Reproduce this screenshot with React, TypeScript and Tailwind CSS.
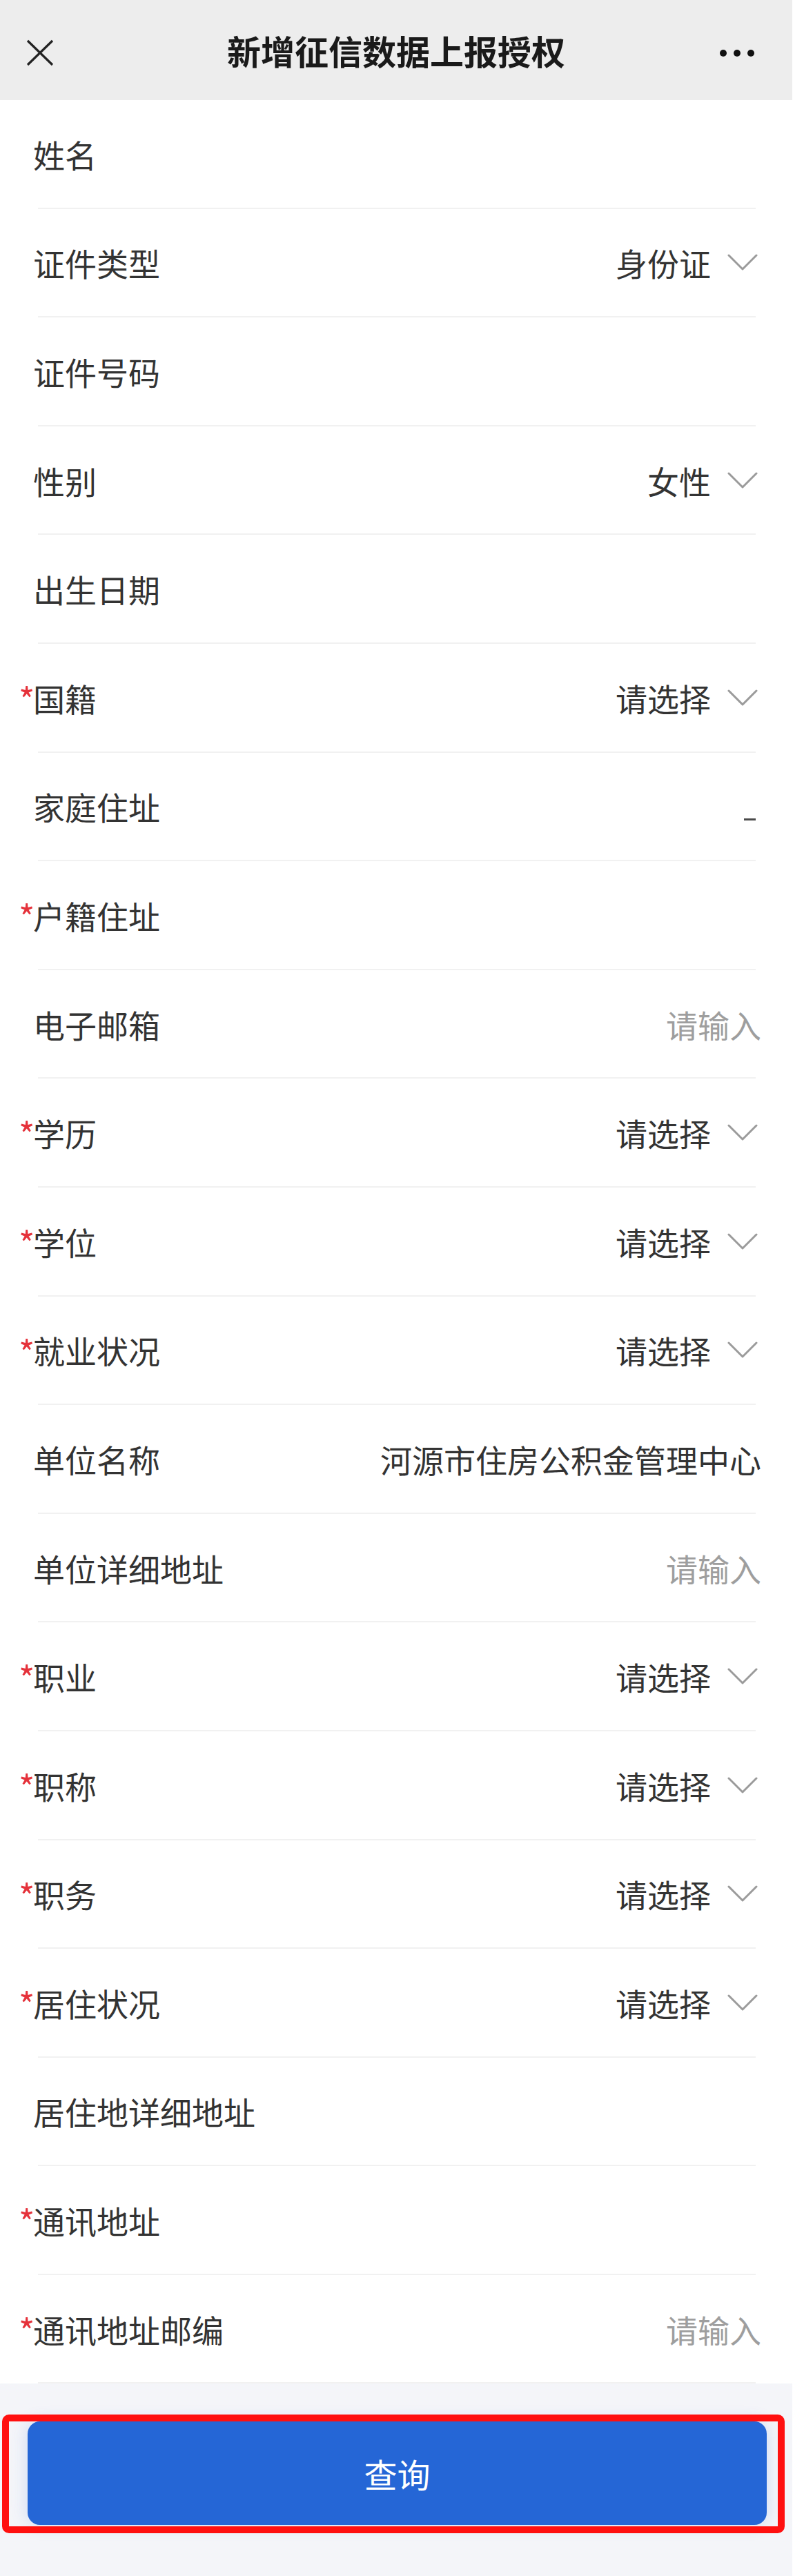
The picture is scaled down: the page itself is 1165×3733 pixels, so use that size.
type Field = {
  label: string;
  required?: boolean;
  value?: string;
  kind?: "select" | "input" | "dash" | "text";
};

const fields: Field[] = [
  { label: "姓名" },
  { label: "证件类型", value: "身份证", kind: "select" },
  { label: "证件号码" },
  { label: "性别", value: "女性", kind: "select" },
  { label: "出生日期" },
  { label: "国籍", required: true, value: "请选择", kind: "select" },
  { label: "家庭住址", kind: "dash" },
  { label: "户籍住址", required: true },
  { label: "电子邮箱", value: "请输入", kind: "input" },
  { label: "学历", required: true, value: "请选择", kind: "select" },
  { label: "学位", required: true, value: "请选择", kind: "select" },
  { label: "就业状况", required: true, value: "请选择", kind: "select" },
  { label: "单位名称", value: "河源市住房公积金管理中心", kind: "text" },
  { label: "单位详细地址", value: "请输入", kind: "input" },
  { label: "职业", required: true, value: "请选择", kind: "select" },
  { label: "职称", required: true, value: "请选择", kind: "select" },
  { label: "职务", required: true, value: "请选择", kind: "select" },
  { label: "居住状况", required: true, value: "请选择", kind: "select" },
  { label: "居住地详细地址" },
  { label: "通讯地址", required: true },
  { label: "通讯地址邮编", required: true, value: "请输入", kind: "input" },
];

function Chevron() {
  return (
    <svg className="ml-[24px] shrink-0" width="44" height="26" viewBox="0 0 44 26" fill="none">
      <polyline points="2,3 22,23 42,3" stroke="#9b9b9b" strokeWidth="3" strokeLinecap="round" strokeLinejoin="round" />
    </svg>
  );
}

function FieldRow({ field }: { field: Field }) {
  return (
    <div className="pl-[55px] pr-[53px]">
      <div className="relative flex h-[157.6px] items-center justify-between border-b-2 border-[#f1f1f1]">
        {field.required ? (
          <span className="absolute left-[-28px] top-[54px] text-[50px] leading-none text-[#e5323b]">*</span>
        ) : null}
        <span className="-ml-[7px] text-[46px] leading-none text-[#333333]">{field.label}</span>
        {field.kind === "select" ? (
          <div className="-mr-[3px] flex items-center">
            <span className="text-[46px] leading-none text-[#333333]">{field.value}</span>
            <Chevron />
          </div>
        ) : null}
        {field.kind === "input" ? (
          <span className="-mr-[8px] text-[46px] leading-none text-[#9e9e9e]">{field.value}</span>
        ) : null}
        {field.kind === "text" ? (
          <span className="-mr-[8px] text-[46px] leading-none text-[#333333]">{field.value}</span>
        ) : null}
        {field.kind === "dash" ? (
          <span className="mt-[38px] h-[3px] w-[17px] bg-[#4a4a4a]" />
        ) : null}
      </div>
    </div>
  );
}

export default function App() {
  return (
    <div
      className="min-h-[3733px] w-[1165px] bg-white"
      style={{ fontFamily: '"Noto Sans CJK SC", "Noto Sans", sans-serif' }}
    >
      <div className="flex min-h-[3733px] w-[1148px] flex-col">
        <header className="relative flex h-[145px] items-center justify-center bg-[#ededed]">
          <svg className="absolute left-[38px] top-[57px]" width="40" height="39" viewBox="0 0 40 39" fill="none">
            <path d="M2 2 L38 37 M38 2 L2 37" stroke="#222222" strokeWidth="3.2" />
          </svg>
          <h1 className="text-[49px] font-bold leading-none text-[#1a1a1a]">新增征信数据上报授权</h1>
          <div className="absolute left-[1043px] top-[72px] flex gap-[10px]">
            <span className="size-[10px] rounded-full bg-[#111111]" />
            <span className="size-[10px] rounded-full bg-[#111111]" />
            <span className="size-[10px] rounded-full bg-[#111111]" />
          </div>
        </header>

        <main className="bg-white">
          {fields.map((field) => (
            <FieldRow key={field.label} field={field} />
          ))}
        </main>

        <footer className="flex-1 bg-[#f4f5f9] pl-[40px] pr-[37px] pt-[55px]">
          <div className="relative">
            <button
              className="flex h-[150px] w-full items-center justify-center rounded-[18px] bg-[#2566d6] text-[48px] font-normal leading-none text-white shadow-[0_0_24px_rgba(37,102,214,0.18)]"
              type="button"
            >
              查询
            </button>
            <div className="pointer-events-none absolute bottom-[-12px] left-[-37px] right-[-26px] top-[-10px] rounded-[10px] border-[10px] border-[#ff1010]" />
          </div>
        </footer>
      </div>
    </div>
  );
}
